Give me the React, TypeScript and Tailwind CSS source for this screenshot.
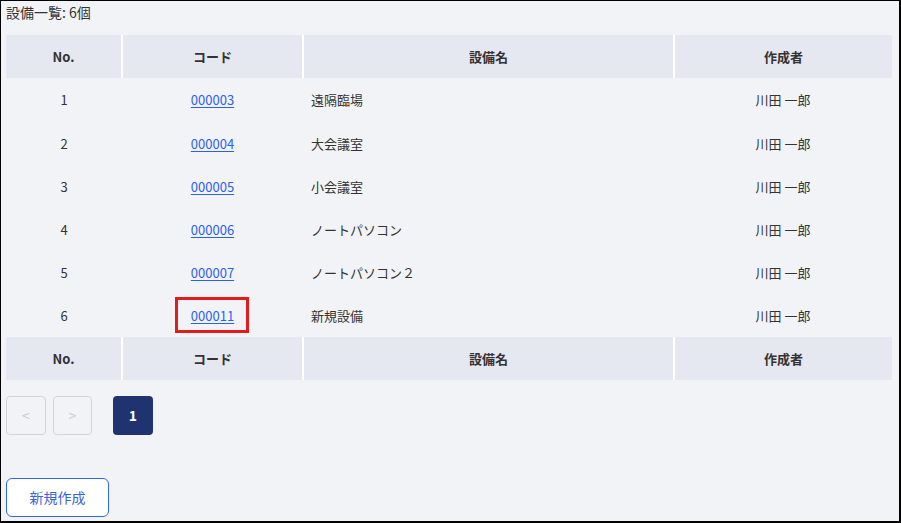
import React from 'react';

type Equipment = {
  no: number;
  code: string;
  name: string;
  author: string;
};

const equipments: Equipment[] = [
  { no: 1, code: '000003', name: '遠隔臨場', author: '川田 一郎' },
  { no: 2, code: '000004', name: '大会議室', author: '川田 一郎' },
  { no: 3, code: '000005', name: '小会議室', author: '川田 一郎' },
  { no: 4, code: '000006', name: 'ノートパソコン', author: '川田 一郎' },
  { no: 5, code: '000007', name: 'ノートパソコン２', author: '川田 一郎' },
  { no: 6, code: '000011', name: '新規設備', author: '川田 一郎' },
];

function HeaderRow() {
  return (
    <tr className="bg-[#e5e8f1] h-[43px] text-[13px] font-bold text-[#333]">
      <th className="w-[116px] border-r-2 border-white">No.</th>
      <th className="w-[181px] border-r-2 border-white">コード</th>
      <th className="w-[371px] border-r-2 border-white">設備名</th>
      <th>作成者</th>
    </tr>
  );
}

export default function App() {
  return (
    <div
      className="w-[901px] h-[523px] bg-[#f2f3f7] border-l border-t border-r-2 border-b-2 border-black text-[#333] overflow-hidden"
      style={{ fontFamily: '"Noto Sans CJK JP", "Noto Sans", sans-serif' }}
    >
      <div className="pl-[5px] pr-[6px]">
        {/* 件数 */}
        <div className="h-[34px] text-[14px] leading-[22px]">設備一覧: {equipments.length}個</div>

        <table className="w-[886px] border-collapse table-fixed text-[13px]">
          <thead>
            <HeaderRow />
          </thead>
          <tbody>
            {equipments.map((e, i) => (
              <tr key={e.code} className={i === 0 ? 'h-[44px]' : 'h-[43px]'}>
                <td className="text-center">{e.no}</td>
                <td className="text-center">
                  <span className="relative inline-block">
                    <a href="#" className="text-[#2b5ff0] underline underline-offset-2">
                      {e.code}
                    </a>
                    {e.code === '000011' && (
                      <span className="absolute left-[-16px] right-[-15px] top-[-9px] bottom-[-8px] border-[3px] border-[#e21b1b] pointer-events-none" />
                    )}
                  </span>
                </td>
                <td className="pl-[8px]">{e.name}</td>
                <td className="text-center">{e.author}</td>
              </tr>
            ))}
          </tbody>
          <tfoot>
            <HeaderRow />
          </tfoot>
        </table>

        {/* ページ送り */}
        <div className="flex items-center mt-[16px] h-[39px]">
          <button className="w-[40px] h-[39px] rounded-[4px] border border-[#d4d4d8] text-[#c8c8cc] text-[14px]">
            &lt;
          </button>
          <button className="ml-[7px] w-[39px] h-[39px] rounded-[4px] border border-[#d4d4d8] text-[#c8c8cc] text-[14px]">
            &gt;
          </button>
          <button className="ml-[21px] w-[40px] h-[39px] rounded-[4px] bg-[#1e3370] text-white text-[14px] font-bold">
            1
          </button>
        </div>

        <button className="mt-[43px] w-[103px] h-[39px] rounded-[6px] border border-[#2f66f0] bg-white text-[#3a63d8] text-[14px]">
          新規作成
        </button>
      </div>
    </div>
  );
}
